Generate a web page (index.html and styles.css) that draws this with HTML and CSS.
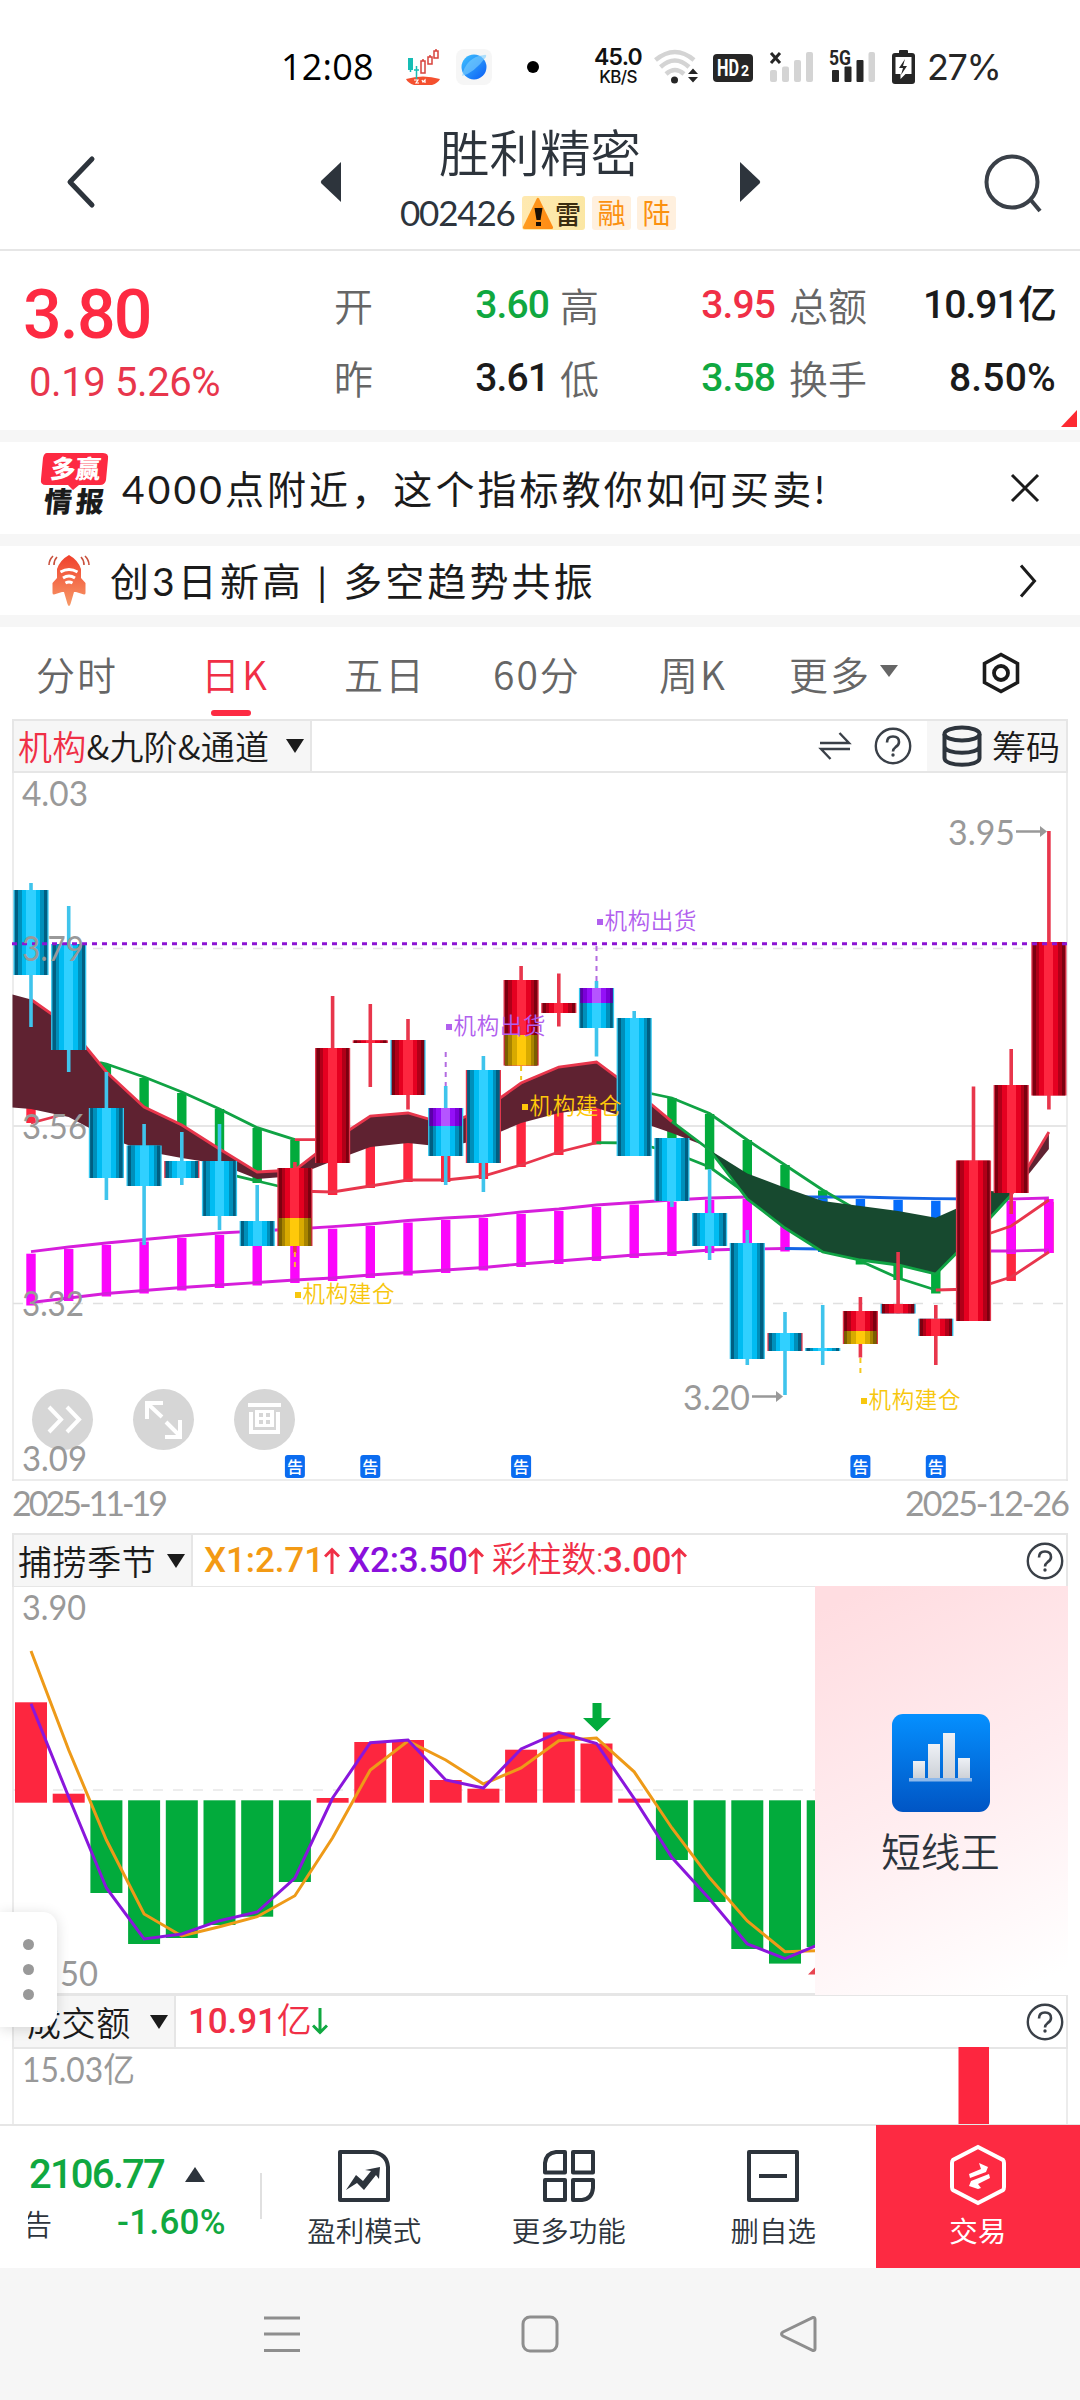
FILE: index.html
```html
<!DOCTYPE html>
<html lang="zh-CN">
<head>
<meta charset="utf-8">
<title>胜利精密 002426</title>
<link rel="stylesheet" href="styles.css">
</head>
<body>
<div class="phone">
  <div class="status">
    <span class="clock">12:08</span>
    <svg class="st-boat" width="36" height="38" viewBox="0 0 36 38"><path d="M1 31q17-5 34 0q-2 4-8 6H9q-6-2-8-6z" fill="#f4502f"/><rect x="3" y="10" width="5" height="12" fill="#16bdb5"/><path d="M5.500 21v3M11.500 18v13M9 22h5" stroke="#16bdb5" stroke-width="1.500"/><g fill="none" stroke="#d8433c" stroke-width="1.500"><path d="M16 13h4v12h-4zM23 9h4v7h-4zM29 3h4v7h-4zM18 11v2M25 7v2M31 1v2"/></g><path d="M9 32h4l-2 3h3M17 32l1 2l2-2v3" fill="none" stroke="#fff" stroke-width="1.200"/></svg>
    <svg class="st-planet" width="36" height="36" viewBox="0 0 36 36"><defs><linearGradient id="pl" x1="0" y1="0" x2="1" y2="1"><stop offset="0" stop-color="#3fc3ff"/><stop offset="1" stop-color="#0b5cf5"/></linearGradient></defs><rect width="36" height="36" rx="8" fill="#f6f6f6"/><circle cx="18" cy="18" r="12.500" fill="url(#pl)"/><path d="M6 27Q18 24 30 8Q31 5 28 6Q10 8 6 27z" fill="#7fd0ff" opacity=".6"/></svg>
    <span class="st-dot"></span>
    <span class="speed"><b>45.0</b><i>KB/S</i></span>
    <svg class="st-icons" width="264" height="40" viewBox="652 47 264 40">
      <g fill="none" stroke="#d4d4d4" stroke-width="4.500"><path d="M655.500 60Q675 44 694 60"/><path d="M660.500 67Q675 54 689 67"/><path d="M666 74Q675 66 684 74"/></g>
      <circle cx="674.500" cy="80" r="3.500" fill="#262626"/><path d="M688 74l5-5.500l5 5.500zM688 77l5 5.500l5-5.500z" fill="#262626"/>
      <rect x="713" y="54" width="40" height="28" rx="4" fill="#262626"/>
      <text x="717" y="76" class="hd" textLength="22" lengthAdjust="spacingAndGlyphs">HD</text><text x="741" y="76" class="hd2">2</text>
      <path d="M771 53l9 10M780 53l-9 10" stroke="#262626" stroke-width="3"/>
      <g fill="#d4d4d4"><rect x="770" y="70" width="7" height="12" rx="2"/><rect x="782" y="66.500" width="7" height="15.500" rx="2"/><rect x="794" y="60" width="7" height="22" rx="2"/><rect x="806" y="52" width="7" height="30" rx="2"/><rect x="868.500" y="52" width="6.500" height="30" rx="2"/></g>
      <g fill="#262626"><rect x="832" y="70" width="7" height="12" rx="1"/><rect x="844.500" y="66.500" width="7" height="15.500" rx="1"/><rect x="856.500" y="60" width="7" height="22" rx="1"/><rect x="899" y="50" width="9" height="5" rx="1"/><rect x="892" y="53" width="23" height="31" rx="3"/></g>
      <text x="829" y="65" class="g5" textLength="22" lengthAdjust="spacingAndGlyphs">5G</text>
      <path d="M895.500 57h16v17h-6l-5 5v-5h-5z" fill="#fff"/><path d="M905 59l-6 9h4l-2 7l6-9h-4z" fill="#262626"/>
    </svg>
    <span class="batt">27%</span>
  </div>

  <header class="header">
    <svg class="h-back" width="32" height="54" viewBox="0 0 32 54"><path d="M27 4L5 27L27 50" fill="none" stroke="#2d343c" stroke-width="5" stroke-linejoin="round" stroke-linecap="round"/></svg>
    <svg class="h-prev" width="21" height="42" viewBox="0 0 21 42"><path d="M21 1v40L1.500 22.500q-1.500-1.500 0-3z" fill="#2d343c"/></svg>
    <div class="h-mid">
      <h1>胜利精密</h1>
      <div class="h-sub"><span class="code">002426</span>
        <span class="tag warn"><svg width="32" height="34" viewBox="0 0 32 34"><defs><linearGradient id="wg"><stop offset="0" stop-color="#ff9d1e"/><stop offset="1" stop-color="#ff8a14"/></linearGradient></defs><path d="M17 2.500L31 31q.5 2-2 2H3q-3 0-1.800-2.500L14.500 3q1.200-2 2.500-.5z" fill="url(#wg)"/><path d="M12.500 12h8l-2 12h-4zM14 26h5v4h-5z" fill="#1b1005"/></svg>雷</span><span class="tag t2">融</span><span class="tag t3">陆</span></div>
    </div>
    <svg class="h-next" width="21" height="42" viewBox="0 0 21 42"><path d="M0 1v40L19.500 22.500q1.500-1.500 0-3z" fill="#2d343c"/></svg>
    <svg class="h-search" width="60" height="60" viewBox="0 0 60 60"><circle cx="28" cy="28" r="25.500" fill="none" stroke="#3a4048" stroke-width="4"/><path d="M46 45l10 12" stroke="#3a4048" stroke-width="4"/></svg>
  </header>

  <section class="quote">
    <div class="q-main"><div class="price">3.80</div><div class="chg">0.19 5.26%</div></div>
    <div class="q-grid">
      <span class="k">开</span><span class="v green">3.60</span><span class="k">高</span><span class="v red">3.95</span><span class="k">总额</span><span class="v">10.91亿</span>
      <span class="k">昨</span><span class="v">3.61</span><span class="k">低</span><span class="v green">3.58</span><span class="k">换手</span><span class="v wide">8.50%</span>
    </div>
    <i class="q-corner"></i>
  </section>

  <section class="news n1">
    <svg width="70" height="66" viewBox="40 452 70 66"><path d="M47 454h56q6 0 5 6l-2 21q-1 5-6 5H79l-6 5l-5-5H46q-6 0-5-6l2-21q1-5 4-5z" fill="#fd2a42"/><g transform="skewX(-6)"><text x="100" y="479" class="lg1" textLength="50">多赢</text><text x="97" y="513" class="lg2" textLength="60">情报</text></g></svg>
    <span class="news-t">4000点附近，这个指标教你如何买卖!</span>
    <svg class="x" width="30" height="30" viewBox="0 0 30 30"><path d="M2 2L28 28M28 2L2 28" stroke="#1b1b1b" stroke-width="3" /></svg>
  </section>
  <section class="news n2">
    <svg width="42" height="52" viewBox="48 555 42 52"><defs><linearGradient id="rk" x1="0" y1="0" x2="0" y2="1"><stop offset="0" stop-color="#f0402c"/><stop offset="1" stop-color="#f79a68"/></linearGradient></defs><path d="M69 555q-9 5-12 14v9l-4.500 5v10q0 1.500 1.500 1.500l8-2.500h2l3.500 12q1.500 4 3 0l3.500-12h2l8 2.500q1.500 0 1.500-1.500v-10l-4.500-5v-9q-3-9-12-14z" fill="url(#rk)"/><g fill="none" stroke="#fff" stroke-width="2.800"><path d="M60.500 572q8.500-5 17 0M63 578q6-4 12 0M65.500 583q3.500-2 7 0"/></g><path d="M53 556q-4 4-4 9M57 557q-3 3-3 8M85 556q4 4 4 9M81 557q3 3 3 8" fill="none" stroke="#c9503c" stroke-width="1.600"/></svg>
    <span class="news-t">创3日新高 | 多空趋势共振</span>
    <svg class="go" width="18" height="34" viewBox="0 0 18 34"><path d="M2 1.500L15.500 17L2 32.500" fill="none" stroke="#1b1b1b" stroke-width="3"/></svg>
  </section>

  <nav class="tabs">
    <span>分时</span><span class="on">日K</span><span>五日</span><span>60分</span><span>周K</span><span>更多<i></i></span>
    <svg width="40" height="42" viewBox="0 0 40 42"><path d="M20 2.500L36.500 11.500v19L20 39.500L3.500 30.500v-19z" fill="none" stroke="#1b1b1b" stroke-width="3.600"/><circle cx="20" cy="21" r="7" fill="none" stroke="#1b1b1b" stroke-width="3.800"/></svg>
  </nav>

  <div class="bar b1">
    <div class="name"><em>机构</em>&amp;九阶&amp;通道<i></i></div>
    <svg class="swap" width="34" height="30" viewBox="0 0 34 30"><path d="M2 12h29L21.500 2M32 18H3l9.500 10" fill="none" stroke="#3a4048" stroke-width="2.400"/></svg>
    <svg class="help" width="38" height="38" viewBox="0 0 38 38"><use href="#q"/></svg>
    <div class="chip"><svg width="40" height="42" viewBox="0 0 40 42"><g fill="none" stroke="#2d343c" stroke-width="4"><ellipse cx="20" cy="9" rx="17.500" ry="6.500"/><path d="M2.500 9v24c0 9 35 9 35 0V9M2.500 21c0 9 35 9 35 0"/></g></svg>筹码</div>
  </div>
  <svg id="kline" class="chart" width="1080" height="710" viewBox="0 771 1080 710"></svg>
  <div class="dates"><span class="from">2025-11-19</span><span>2025-12-26</span></div>

  <div class="bar b2">
    <div class="name">捕捞季节<i></i></div>
    <div class="vals"><span class="or">X1:2.71</span><svg class="ar" width="16" height="27" viewBox="0 0 16 27"><path d="M8 27V3M1 9.500L8 2.500L15 9.500" /></svg><span class="pu">X2:3.50</span><svg class="ar" width="16" height="27" viewBox="0 0 16 27"><path d="M8 27V3M1 9.500L8 2.500L15 9.500"/></svg><span class="rd">彩柱数:<b>3.00</b></span><svg class="ar" width="16" height="27" viewBox="0 0 16 27"><path d="M8 27V3M1 9.500L8 2.500L15 9.500"/></svg></div>
    <svg class="help" width="38" height="38" viewBox="0 0 38 38"><use href="#q"/></svg>
  </div>
  <div class="sub">
    <svg id="season" class="chart" width="815" height="409" viewBox="0 1586 815 409"></svg>
    <aside class="promo">
      <svg width="98" height="98" viewBox="0 0 98 98"><defs><linearGradient id="pb" x1="0" y1="0" x2="0" y2="1"><stop offset="0" stop-color="#0590ff"/><stop offset="1" stop-color="#0055c4"/></linearGradient><linearGradient id="pw" x1="0" y1="0" x2="0" y2="1"><stop offset="0" stop-color="#eef1f6"/><stop offset="1" stop-color="#ccd0d6"/></linearGradient></defs><rect width="98" height="98" rx="11" fill="url(#pb)"/><g fill="url(#pw)"><rect x="21" y="47" width="12" height="18"/><rect x="36" y="30" width="12" height="35"/><rect x="51" y="19" width="12" height="46"/><rect x="66" y="44" width="12" height="21"/></g><rect x="17" y="64" width="63" height="3.500" fill="#8fb9ea"/></svg>
      <span>短线王</span>
    </aside>
    <div class="handle"><i></i><i></i><i></i></div>
  </div>
  <div class="bar b3">
    <div class="name">成交额<i></i></div>
    <div class="vals"><span class="rd"><b>10.91</b>亿</span><svg class="ar gr" width="16" height="27" viewBox="0 0 16 27"><path d="M8 0V24M1 17.500L8 24.500L15 17.500"/></svg></div>
    <svg class="help" width="38" height="38" viewBox="0 0 38 38"><use href="#q"/></svg>
  </div>
  <svg id="volume" class="chart" width="1080" height="77" viewBox="0 2047 1080 77"></svg>

  <footer class="dock">
    <div class="index"><div class="r1">2106.77<i></i></div><div class="r2"><span class="clip">告</span><span class="pct">-1.60%</span></div></div>
    <div class="item"><svg width="54" height="54" viewBox="0 0 54 54"><path d="M3 3h33q14 2 15 15v33H3z" class="ln"/><path d="M9 41l10-15l7 6l8-10l-6-1l15-3l-1 12l-3-4l-12 15l-7-7z" fill="#2d343c"/></svg>盈利模式</div>
    <div class="item"><svg width="54" height="54" viewBox="0 0 54 54"><path d="M3 23.500V14Q4 4 14 3h9v20.500zM31 3h20v20.500H31zM3 31h20v20H3zM31 31h20v8q-1 11-11 12h-9z" class="ln"/></svg>更多功能</div>
    <div class="item"><svg width="54" height="54" viewBox="0 0 54 54"><path d="M3 3h48v48H3zM13 27h28" class="ln"/></svg>删自选</div>
    <div class="item trade"><svg width="58" height="62" viewBox="0 0 58 62"><path d="M29 3L54 16q1 1 1 3v24q0 2-1 3L29 59L4 46q-1-1-1-3V19q0-2 1-3z" fill="none" stroke="#fff" stroke-width="4"/><path d="M30 19l9 4l-2 5l-16 6l-1-4l12-5zM40 30l1 4l-12 6l3 4l-3 1l-9-3l2-5z" fill="#fff"/></svg>交易</div>
  </footer>

  <div class="sysnav">
    <svg width="38" height="38" viewBox="0 0 38 38"><path d="M1 3h36M1 19h36M1 35.500h36"/></svg>
    <svg width="38" height="38" viewBox="0 0 38 38"><rect x="2" y="2" width="34" height="34" rx="7"/></svg>
    <svg width="38" height="38" viewBox="0 0 38 38"><path d="M34 2.500q2-.5 2 2v29q0 2.500-2 2L4 21q-3-2 0-4z"/></svg>
  </div>
</div>
<svg class="defs" width="0" height="0"><symbol id="q" viewBox="0 0 38 38"><circle cx="19" cy="19" r="17.200" fill="none" stroke="#3a4048" stroke-width="2.400"/><path d="M13 15.500q0-6 6-6t6 5.500q0 3-3.500 5.200Q19 22 19 24.500" fill="none" stroke="#3a4048" stroke-width="2.600"/><circle cx="19" cy="28" r="1.700" fill="#3a4048"/></symbol></svg>
<script src="charts.js"></script>
</body>
</html>
```
FILE: styles.css
```css
* { box-sizing: border-box; }
html, body { margin: 0; padding: 0; }
body { background: #fff; color: #1b1b1b; font-family: "Lato", "Noto Sans CJK SC", sans-serif; }
i, em { font-style: normal; }
svg { display: block; flex: none; }
.defs { position: absolute; }
.phone { width: 1080px; height: 2400px; overflow: hidden; position: relative; line-height: 1; white-space: nowrap; }

.status { height: 110px; padding: 24px 0 0 281px; display: flex; align-items: center; color: #111; }
.status > * { flex: none; }
.clock { width: 124px; font: 500 36px/1 "Open Sans", sans-serif; letter-spacing: .2px; color: #000; }
.st-planet { margin-left: 15px; }
.st-dot { width: 12px; height: 12px; border-radius: 50%; background: #000; margin-left: 35px; }
.speed { width: 50px; margin-left: 54px; display: flex; flex-direction: column; align-items: center; }
.speed b { font: 600 23px/21px Inter, sans-serif; letter-spacing: -.8px; }
.speed i { font: 500 17px/19px Inter, sans-serif; letter-spacing: -.6px; }
.st-icons { margin-left: 9px; }
.hd, .hd2, .g5 { font-family: Roboto, sans-serif; font-weight: 700; }
.hd { font-size: 23px; fill: #fff; }
.hd2 { font-size: 14px; fill: #fff; }
.g5 { font-size: 21px; fill: #262626; }
.batt { margin-left: 11px; font-family: Inter, sans-serif; font-size: 36px; letter-spacing: -1.400px; color: #262626; }

.header { height: 141px; border-bottom: 2px solid #e6e6e6; display: flex; align-items: flex-start; color: #2d343c; }
.h-back { margin: 45px 0 0 65px; }
.h-prev { margin: 51px 0 0 223px; }
.h-mid { width: 398px; text-align: center; }
.h-mid h1 { margin: 14px 0 0; font-size: 50.500px; line-height: 52px; font-weight: 350; font-family: "Noto Sans CJK SC", sans-serif; }
.h-sub { display: flex; align-items: center; margin: 19px 0 0 59px; }
.code { font-size: 35px; letter-spacing: -1.200px; width: 122px; text-align: left; font-family: Lato, sans-serif; font-weight: 400; }
.tag { height: 34px; border-radius: 3px; background: #fff0de; color: #fb9110; font-size: 28px; line-height: 33px; width: 39px; font-family: "Noto Sans CJK SC", sans-serif; }
.tag.warn { width: 63px; background: linear-gradient(90deg, #ffe9b0, #fbe7a4); color: #3a2c10; font-weight: 500; font-size: 26px; display: flex; }
.tag.warn svg { margin-right: 1px; }
.t2 { margin-left: 7px; }
.t3 { margin-left: 6px; }
.h-next { margin-top: 51px; margin-left: 1px; }
.h-search { margin: 44px 0 0 223px; }

.quote { height: 179px; display: flex; position: relative; }
.q-main { width: 330px; padding-left: 23px; color: #fd2a42; font-family: Roboto, sans-serif; }
.price { margin-top: 30px; font-size: 68px; line-height: 68px; font-weight: 500; letter-spacing: -1.800px; }
.chg { margin: 14px 0 0 6px; font-size: 40px; line-height: 40px; letter-spacing: -.4px; color: #e8364c; }
.q-grid { width: 726px; margin-top: 18px; height: 150px; display: grid; grid-template-columns: 43px 176px 50px 176px 92px 189px; grid-template-rows: 73px 73px; align-items: center; }
.q-grid .k { font: 350 39px/1 "Noto Sans CJK SC", sans-serif; color: #666; justify-self: end; margin-top: -2px; }
.q-grid .v { font: 500 39px/1 Roboto, "Noto Sans CJK SC", sans-serif; letter-spacing: -.9px; justify-self: end; }
.q-grid .wide { letter-spacing: .2px; }
.q-grid .green { color: #10a840; }
.q-grid .red { color: #f02f46; }
.q-corner { position: absolute; right: 3px; bottom: 3px; border-left: 16px solid transparent; border-bottom: 17px solid #fd2a32; }

.news { border-top: 12px solid #f6f6f6; display: flex; align-items: center; color: #1b1b1b; }
.n1 { height: 104px; padding-left: 40px; }
.n2 { height: 81px; padding-left: 48px; }
.n1 > svg:first-child { margin-bottom: 8px; }
.news-t { font: 350 39px/1 Lato, "Noto Sans CJK SC", sans-serif; font-weight: 400; letter-spacing: 3.100px; margin: 2px 0 0 12px; width: 888px; }
.n2 .news-t { margin-left: 20px; width: 909px; }
.lg1, .lg2 { font-family: "Noto Sans CJK SC", sans-serif; font-weight: 900; }
.lg1 { font-size: 25px; fill: #fff; }
.lg2 { font-size: 28px; fill: #1b1b1b; }

.tabs { height: 104px; border-top: 12px solid #f6f6f6; display: flex; align-items: center; color: #666; font: 350 39px/1 "Noto Sans", "Noto Sans CJK SC", sans-serif; font-family: "Noto Sans CJK SC", sans-serif; letter-spacing: 2px; padding-left: 36px; }
.tabs span { display: flex; align-items: center; height: 92px; position: relative; }
.tabs span:nth-child(1) { width: 165px; }
.tabs span:nth-child(2) { width: 143px; }
.tabs span:nth-child(3) { width: 149px; }
.tabs span:nth-child(4) { width: 166px; }
.tabs span:nth-child(5) { width: 130px; }
.tabs span:nth-child(6) { width: 192px; }
.tabs .on { color: #f02f46; }
.tabs .on::after { content: ""; position: absolute; left: 10px; bottom: 3px; width: 40px; height: 6px; border-radius: 3px; background: #fd2a42; }
.tabs i { margin-left: 9px; margin-bottom: 4px; border: 9px solid transparent; border-top: 12px solid #666; border-bottom: 0; }

.bar { margin: 0 12px; border: 2px solid #e6e6e6; border-bottom: 0; display: flex; align-items: center; font: 400 34px/1 "Noto Sans CJK SC", sans-serif; }
.b1 { height: 52px; }
.b2, .b3 { height: 53px; }
.bar .name { background: #f6f6f6; align-self: stretch; display: flex; align-items: center; border-right: 2px solid #e6e6e6; font-weight: 350; }
.bar .name em { color: #f02f46; }
.bar .name i { border: 9.500px solid transparent; border-top: 14px solid #1b1b1b; border-bottom: 0; }
.b1 .name { width: 298px; padding-left: 4px; letter-spacing: .2px; }
.b1 .name i { margin-left: auto; margin-right: 6px; }
.b2 .name { width: 179px; padding-left: 4px; letter-spacing: .6px; }
.b2 .name i { margin-left: auto; margin-right: 6px; }
.b3 .name { width: 162px; padding-left: 13px; letter-spacing: .6px; }
.b3 .name i { margin-left: auto; margin-right: 6px; }
.swap { margin-left: 506px; }
.b1 .help { margin-left: 22px; }
.chip { margin-left: auto; width: 139px; align-self: stretch; background: #f6f6f6; display: flex; align-items: center; gap: 10px; padding-left: 15px; font-weight: 350; }
.vals { display: flex; align-items: center; padding-left: 11px; height: 50px; font: 500 35px/1 Roboto, "Noto Sans CJK SC", sans-serif; letter-spacing: -.1px; }
.b2 .help, .b3 .help { margin-left: auto; margin-right: 2px; }
.or { color: #f39a14; }
.pu { color: #8a10dc; margin-left: 8px; }
.rd { color: #f02f46; margin-left: 8px; font-weight: 350; }
.b2 .rd { letter-spacing: -.3px; }
.b3 .rd { margin-left: 1px; }
.rd b { font-weight: 500; }
.ar { fill: none; stroke: #f02f46; stroke-width: 3; margin-left: 0; }
.gr { stroke: #10a840; }

.axis { font-family: Lato, "Noto Sans CJK SC", sans-serif; font-size: 34px; font-weight: 400; fill: #999; }
.note { font-family: "Noto Sans CJK SC", sans-serif; font-size: 22.500px; font-weight: 350; }
.ann { font-family: "Noto Sans CJK SC", sans-serif; font-size: 16px; font-weight: 500; fill: #fff; text-anchor: middle; }
.dates { height: 52px; padding: 5px 12px 0 12px; display: flex; justify-content: space-between; font: 400 34px/34px Lato, sans-serif; color: #999; letter-spacing: -2px; }
.dates .from { letter-spacing: -3px; }

.sub { display: flex; height: 408px; position: relative; }
.promo { width: 253px; height: 409px; background: linear-gradient(155deg, #ffdde1 5%, #ffecef 50%, #fff 95%); display: flex; flex-direction: column; align-items: center; padding: 128px 2px 0 0; }
.promo span { margin-top: 17px; font: 350 39.500px/42px "Noto Sans CJK SC", sans-serif; color: #2d343c; }
.handle { position: absolute; left: 0; top: 326px; width: 57px; height: 115px; border-radius: 0 14px 14px 0; background: #fff; box-shadow: 0 2px 14px rgba(0,0,0,.14); display: flex; flex-direction: column; align-items: center; justify-content: center; gap: 14px; z-index: 2; }
.handle i { width: 11px; height: 11px; border-radius: 50%; background: #999; }

.dock { height: 144px; border-top: 2px solid #e6e6e6; display: flex; background: #fff; color: #2d343c; }
.index { width: 262px; position: relative; color: #10a840; font-family: Roboto, sans-serif; }
.index::after { content: ""; position: absolute; right: 0; top: 47px; width: 2px; height: 46px; background: #e0e0e0; }
.r1 { padding: 29px 0 0 29px; font-size: 40px; line-height: 40px; font-weight: 500; letter-spacing: -1.800px; display: flex; align-items: center; }
.r1 i { margin-left: 21px; border: 10px solid transparent; border-bottom: 15px solid #2d343c; border-top: 0; margin-bottom: 2px; }
.r2 { display: flex; align-items: center; margin-top: 10px; font-size: 35px; line-height: 36px; font-weight: 500; }
.clip { width: 24px; height: 36px; margin-left: 28px; overflow: hidden; color: #2d343c; font: 350 29px/36px "Noto Sans CJK SC", sans-serif; display: flex; justify-content: flex-end; }
.pct { margin-left: 65px; letter-spacing: .3px; }
.item { width: 204.500px; display: flex; flex-direction: column; align-items: center; padding-top: 23px; font: 350 28.500px/34px "Noto Sans CJK SC", sans-serif; }
.item svg { margin-bottom: 10px; }
.ln { fill: none; stroke: #2d343c; stroke-width: 4; stroke-linejoin: round; }
.trade { background: #fd2a42; color: #fff; width: 204.500px; padding-top: 19px; margin-top: -1px; font-weight: 400; }
.trade svg { margin-bottom: 7px; }

.sysnav { height: 132px; background: #f6f6f6; display: flex; gap: 220px; padding: 47px 0 0 263px; }
.sysnav svg { fill: none; stroke: #8e8e8e; stroke-width: 3; }
```
FILE: charts.js
```js
(function () {
  var X0 = 31, STEP = 37.7;
  function cx(i) { return X0 + STEP * i; }
  function f(n) { return Math.round(n * 10) / 10; }
  function line(x1, y1, x2, y2, c, w, extra) {
    return '<line x1="' + f(x1) + '" y1="' + y1 + '" x2="' + f(x2) + '" y2="' + y2 + '" stroke="' + c + '" stroke-width="' + w + '" ' + (extra || '') + '/>';
  }
  function rect(x, y, w, h, c) {
    return '<rect x="' + f(x) + '" y="' + f(y) + '" width="' + f(w) + '" height="' + f(h) + '" fill="' + c + '"/>';
  }
  // points: [index, y] pairs
  function pts(a) { return a.map(function (p) { return f(cx(p[0])) + ',' + p[1]; }).join(' '); }
  function poly(a, c, w) { return '<polyline points="' + pts(a) + '" fill="none" stroke="' + c + '" stroke-width="' + (w || 2.8) + '"/>'; }
  function seq(start, ys) { return ys.map(function (y, k) { return [start + k, y]; }); }
  function grad(id, edge, dark, mid, core) {
    var s = [[0, edge], [10, edge], [10, dark], [21, dark], [21, mid], [36, mid], [36, core], [64, core], [64, mid], [79, mid], [79, dark], [90, dark], [90, edge], [100, edge]];
    return '<linearGradient id="' + id + '">' + s.map(function (p) { return '<stop offset="' + p[0] + '%" stop-color="' + p[1] + '"/>'; }).join('') + '</linearGradient>';
  }
  var RED = '#fd263f', LINE_RED = '#e8364c', GREEN = '#02ab3c', LINE_GREEN = '#10a344', MAG = '#fb06fb', LINE_MAG = '#d61edb', BLUE = '#066dfb', CYAN = '#3fc4ec';

  var k = '<defs>' + grad('gc', '#005f82', '#008fba', '#00bcf2', '#30d0ff') + grad('gr', '#7c0010', '#b00018', '#e50020', '#fd263f') +
    grad('gp', '#5b00a8', '#7a00d8', '#9410f8', '#b555ff') + grad('gg', '#7a5f00', '#a88400', '#d8aa00', '#ffc90a') + '</defs>';
  k += rect(0, 771, 1080, 710, '#fff');
  k += line(12, 772, 1068, 772, '#e6e6e6', 2) + line(13, 771, 13, 1481, '#e6e6e6', 1.5) + line(1067, 771, 1067, 1481, '#e6e6e6', 1.5) + line(12, 1480, 1068, 1480, '#e6e6e6', 1.5);
  k += line(13, 948.5, 1067, 948.5, '#e3e3e3', 1.3, 'stroke-dasharray="10 10"') + line(13, 1126, 1067, 1126, '#e6e6e6', 2) + line(13, 1303.5, 1067, 1303.5, '#e0e0e0', 1.5, 'stroke-dasharray="10 10"');

  var magU = [1251.7, 1247, 1243, 1239.5, 1236, 1233, 1231, 1229, 1226.7, 1224, 1220.5, 1218, 1216, 1212, 1209, 1205, 1202.5, 1200, 1198, 1197, 1197, 1197, 1197, 1198, 1198.7, 1199, 1199, 1198];
  var magL = [1302.5, 1298, 1293.5, 1290.5, 1287.5, 1285, 1282.5, 1280, 1278, 1275, 1272.5, 1270, 1267.5, 1264, 1261, 1258, 1255, 1253, 1250, 1249, 1248.5, 1249, 1249, 1250, 1250, 1251, 1251, 1250];
  function bar(i, a, b, c) { return rect(cx(i) - 4.7, a, 9.4, b - a, c); }
  // channel columns
  [[2, 1064, 1090], [3, 1078, 1120], [4, 1093, 1140], [5, 1109, 1155], [6, 1128, 1183], [7, 1140, 1188], [17, 1098, 1152], [18, 1114, 1169.5], [19, 1140, 1190], [20, 1165, 1200], [21, 1190.5, 1205], [22, 1240, 1264.5], [23, 1250, 1280], [24, 1260, 1293.5]].forEach(function (b) { k += bar(b[0], b[1], b[2], GREEN); });
  [[0, 1100, 1123], [8, 1140, 1195], [9, 1130, 1188], [10, 1130, 1182], [11, 1130, 1182], [12, 1130, 1179], [13, 1110, 1167], [14, 1100, 1155], [15, 1100, 1144.5], [26, 1226, 1281], [27, 1202, 1253]].forEach(function (b) { k += bar(b[0], b[1], b[2], RED); });
  for (var i = 0; i < 28; i++) {
    if (i === 25) continue;
    var blue = i > 20 && i < 26;
    k += bar(i, magU[i] + (i === 27 ? 1 : 2), magL[i] + 3, blue ? BLUE : MAG);
  }
  k += poly(seq(0, magU.slice(0, 21)), LINE_MAG) + poly(seq(0, magL.slice(0, 21)), LINE_MAG);
  k += poly(seq(20, magU.slice(20, 26)), '#1464e6') + poly(seq(20, magL.slice(20, 26)), '#1464e6');
  k += poly(seq(25, magU.slice(25)), LINE_MAG) + poly(seq(25, magL.slice(25)), LINE_MAG);
  // channel outlines
  k += poly([[1.83, 1062.5]].concat(seq(2, [1064, 1077, 1092, 1109, 1127.7, 1139.7])), LINE_GREEN);
  k += poly(seq(5, [1172, 1181, 1190]), LINE_GREEN) + poly([[7, 1139.7], [8, 1139.7], [9, 1135]], LINE_RED);
  k += poly([[0, 1123], [1, 1113]], LINE_RED);
  k += poly(seq(7, [1191, 1192, 1186, 1180, 1180, 1176, 1165, 1152, 1142.7]), LINE_RED);
  k += poly(seq(15, [1142.7, 1143, 1152, 1167, 1194]), LINE_GREEN);
  k += poly(seq(16, [1090, 1098, 1113.5, 1140, 1165, 1190, 1212]), LINE_GREEN);
  k += poly(seq(22, [1261, 1278, 1290]), LINE_GREEN) + poly(seq(24, [1290, 1289, 1277, 1252]), LINE_RED) + poly(seq(25, [1239, 1226, 1200]), LINE_RED);
  // bands
  var top = [[-0.49, 994.5]].concat(seq(0, [999.5, 1026, 1072, 1107, 1125, 1149, 1172, 1170, 1141, 1116, 1113, 1124, 1110, 1083, 1067, 1062, 1090, 1121.6]));
  var low = [[-0.49, 1107.5]].concat(seq(0, [1109, 1117, 1137, 1151, 1158, 1164, 1179, 1176, 1161, 1147, 1143, 1147, 1139, 1123, 1113, 1108, 1120, 1133]));
  k += '<polygon points="' + pts(top.concat([[17.75, 1144]], low.slice().reverse())) + '" fill="#5f2231"/>';
  var gTop = [[17.75, 1144], [18, 1150], [19, 1173.5], [20, 1187.7], [21, 1201], [22, 1206], [23, 1211], [24, 1217.7], [25, 1201], [25.45, 1191], [26, 1193]];
  var gLow = seq(18, [1150, 1199, 1228, 1252, 1260, 1265, 1274, 1236, 1195]);
  k += '<polygon points="' + pts(gTop.concat(gLow.slice().reverse())) + '" fill="#17492f"/>';
  k += '<polygon points="' + pts([[26, 1196], [27, 1132], [27, 1149]]) + '" fill="#5f2231"/>';
  k += poly(top.slice(1), LINE_RED) + poly([[17, 1121.6]].concat(gLow), LINE_GREEN) + poly([[26, 1195], [27, 1132]], LINE_RED);

  // [high, bodyTop, bodyBottom, low, type, outline, accentTop, accentBottom, accent]
  var C = 'c', R = 'r';
  var candles = [
    [883, 890, 975, 1027, C], [906, 944, 1050, 1072, C], [1072, 1108, 1178, 1200, C], [1124, 1145.5, 1186, 1245, C], [1132, 1161, 1178, 1185, C, R], [1124, 1161, 1216, 1230, C], [1185, 1221, 1246, 1246, C],
    [1162, 1168, 1246, 1253, R, R, 1218, 1246, 'gg'], [996, 1048, 1163, 1163, R], [1004, 1040.3, 1043, 1087, R], [1019, 1040, 1095, 1109.5, R, C], [1086, 1108, 1156, 1185, C, C, 1108, 1126, 'gp'], [1056, 1070, 1163, 1192, C, R],
    [966, 980, 1065.5, 1065.5, R, R, 1035, 1065.5, 'gg'], [973.5, 1003, 1013, 1026.5, R], [981, 988, 1028, 1056.5, C, C, 988, 1003, 'gp'], [1011, 1018, 1156, 1156, C], [1138, 1138, 1201, 1207, C], [1169, 1213, 1246, 1260, C], [1230, 1243, 1359, 1365, C],
    [1312, 1333, 1351, 1395, C, R], [1305, 1348, 1351, 1365, C], [1297, 1311, 1344, 1357.5, R, R, 1331, 1344, 'gg'], [1252, 1304, 1313.5, 1313.5, R, C], [1305, 1318.7, 1336, 1365, R, C], [1086.5, 1160.5, 1321, 1321, R], [1049, 1085, 1193, 1214, R], [831, 942, 1095.5, 1109.5, R]
  ];
  candles.forEach(function (c, i) {
    var x = cx(i), col = c[4] === C ? CYAN : LINE_RED, o = (c[5] || c[4]) === C ? '#35c6ee' : '#e0364c';
    k += line(x, c[0], x, c[3], col, 3.6);
    k += rect(x - 17.6, c[1], 35.2, c[2] - c[1], o) + rect(x - 16.3, c[1], 32.6, c[2] - c[1], 'url(#g' + c[4] + ')');
    if (c[8]) k += rect(x - 16.3, c[6], 32.6, c[7] - c[6], 'url(#' + c[8] + ')');
  });
  var dash = 'stroke-dasharray="5 5"';
  k += line(cx(11), 1052, cx(11), 1086, '#b36be0', 2, dash) + line(cx(15), 946, cx(15), 981, '#b36be0', 2, dash);
  k += line(cx(13), 1066, cx(13), 1080, '#ecc81e', 2, dash) + line(cx(7), 1252, cx(7), 1268, '#ffb030', 2, dash) + line(cx(22), 1358, cx(22), 1373, '#f4c81e', 2, dash);
  k += line(12, 943.7, 1067, 943.7, '#8c14d4', 3, 'stroke-dasharray="5 5"');
  function note(x, y, t, c) { return rect(x, y - 2, 6, 6, c) + '<text class="note" x="' + (x + 7.5) + '" y="' + (y + 8) + '" fill="' + c + '" textLength="92">' + t + '</text>'; }
  k += note(597, 921, '机构出货', '#b160ee') + note(446, 1026, '机构出货', '#b160ee') + note(522, 1106, '机构建仓', '#ffc80a') + note(295, 1294, '机构建仓', '#f7c70e') + note(861, 1400, '机构建仓', '#f7c70e');
  [62.5, 163.5, 264.5].forEach(function (x) { k += '<circle cx="' + x + '" cy="1419.5" r="30.5" fill="#d6d6d6"/>'; });
  k += '<g fill="none" stroke="#fff" stroke-width="4"><path d="M49 1407l12 12.500l-12 12.500M67 1407l12 12.500l-12 12.500"/><path d="M163 1403h-16v16M148 1404l14 13M165 1437h15v-17M179 1435l-13-13"/><path d="M248 1405h33M251 1412v22M278 1412v22M250 1432h29"/></g><path d="M255 1410h19v17h-19z" fill="#fff"/><path d="M259 1413h4v4h-4zM266 1413h4v4h-4zM259 1420h4v4h-4zM266 1420h4v4h-4z" fill="#d6d6d6"/>';
  function ax(x, y, t, w) { return '<text class="axis" x="' + x + '" y="' + y + '" textLength="' + w + '" lengthAdjust="spacingAndGlyphs">' + t + '</text>'; }
  k += ax(22, 806, '4.03', 66) + ax(22, 961, '3.79', 62) + ax(22, 1138.5, '3.56', 65) + ax(22, 1316, '3.32', 62) + ax(22, 1471, '3.09', 65);
  k += ax(948, 845, '3.95', 67) + line(1016, 831.5, 1042, 831.5, '#999', 2.5) + '<path d="M1040 826l7 5.500l-7 5.500z" fill="#999"/>';
  k += ax(683, 1409.5, '3.20', 67) + line(752, 1396.5, 778, 1396.5, '#999', 2.5) + '<path d="M776 1391l7 5.500l-7 5.500z" fill="#999"/>';
  [7, 9, 13, 22, 24].forEach(function (n) { k += '<rect x="' + f(cx(n) - 10) + '" y="1455" width="20" height="23" rx="3" fill="#0b6cf0"/><text class="ann" x="' + f(cx(n)) + '" y="1472.500">告</text>'; });
  document.getElementById('kline').innerHTML = k;

  // season indicator
  var s = line(12, 1586, 815, 1586, '#e6e6e6', 2) + line(13, 1586, 13, 1995, '#e6e6e6', 1.5) + line(12, 1994, 815, 1994, '#e6e6e6', 2) + line(13, 1790, 815, 1790, '#e8e8e8', 1.5, 'stroke-dasharray="10 10"');
  var ends = [1702.3, 1793.7, 1893, 1944, 1938, 1925, 1916.7, 1882, 1798, 1742, 1740, 1780, 1788.7, 1749.7, 1732.4, 1743.5, 1798.6, 1860, 1902, 1949, 1963.6, 1947];
  ends.forEach(function (y, n) { s += y < 1801 ? rect(cx(n) - 16, y, 32, 1802.7 - y, RED) : rect(cx(n) - 16, 1800.3, 32, y - 1800.3, GREEN); });
  s += poly(seq(0, [1651, 1750, 1840, 1914, 1936, 1926.7, 1916.7, 1895.7, 1837.7, 1770, 1741, 1760, 1784, 1768, 1740.8, 1738, 1771.8, 1828, 1877.8, 1921, 1951.7, 1950.5]), '#ee9a18', 3);
  s += poly(seq(0, [1703.7, 1797, 1888, 1939, 1934, 1920.7, 1912, 1878, 1798, 1742.7, 1740, 1780, 1788, 1749, 1732.4, 1743.5, 1798.6, 1857.5, 1899, 1944, 1958.6, 1943]), '#8a16dc', 3);
  s += '<path d="M592.500 1703h9v15h9.500L597 1731.500L583 1718h9.500z" fill="' + GREEN + '"/><path d="M808 1974.500h7v-7z" fill="#e8434f"/>';
  s += ax(22, 1619.5, '3.90', 64) + ax(60, 1985.5, '50', 38);
  document.getElementById('season').innerHTML = s;

  var v = line(12, 2048, 1068, 2048, '#e6e6e6', 2) + line(13, 2047, 13, 2124, '#e6e6e6', 1.5) + line(1067, 2047, 1067, 2124, '#e6e6e6', 1.5);
  v += rect(958.5, 2047, 30.5, 77, RED) + ax(22, 2081.5, '15.03亿', 113);
  document.getElementById('volume').innerHTML = v;
})();
```
